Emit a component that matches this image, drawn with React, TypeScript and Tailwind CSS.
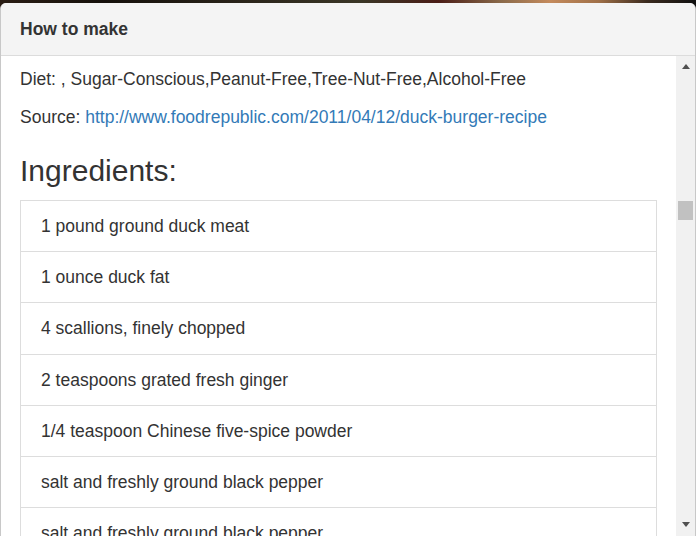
const ingredients = [
  '1 pound ground duck meat',
  '1 ounce duck fat',
  '4 scallions, finely chopped',
  '2 teaspoons grated fresh ginger',
  '1/4 teaspoon Chinese five-spice powder',
  'salt and freshly ground black pepper',
  'salt and freshly ground black pepper',
  '4 brioche buns',
];

function Scrollbar() {
  return (
    <div className="w-[19px] shrink-0 bg-[#f1f1f1] flex flex-col items-center">
      <div className="mt-[8px] w-0 h-0 border-l-[4.5px] border-r-[4.5px] border-b-[5px] border-l-transparent border-r-transparent border-b-[#505050]" />
      <div className="mt-[132px] w-[15px] h-[19px] bg-[#c1c1c1]" />
      <div className="flex-1" />
      <div className="mb-[9px] w-0 h-0 border-l-[4.5px] border-r-[4.5px] border-t-[5px] border-l-transparent border-r-transparent border-t-[#505050]" />
    </div>
  );
}

export default function App() {
  return (
    <div
      className="h-[536px] w-[696px] overflow-hidden pt-[3px] flex flex-col bg-[linear-gradient(to_right,#2a1d14_0%,#15100b_15%,#2a241a_35%,#3a3626_52%,#4a1c16_63%,#8a6a4a_72%,#c48a5c_79%,#a07048_86%,#3a2a1e_93%,#111_100%)]"
      style={{ fontFamily: '"Liberation Sans", Arial, sans-serif' }}
    >
      <div className="flex-1 min-h-0 flex flex-col bg-white rounded-t-[6px] border-x border-[#c8c8c8] overflow-hidden text-[#333]">
        {/* header */}
        <div className="h-[53px] shrink-0 flex items-center px-[19px] bg-[#f4f4f4] border-b border-[#dcdcdc]">
          <h4 className="text-[17.5px] leading-[20px] font-bold">How to make</h4>
        </div>

        {/* body */}
        <div className="flex-1 min-h-0 flex">
          <div className="flex-1 min-w-0 overflow-hidden px-[19px] pt-[11px]">
            <p className="text-[17.5px] leading-[24px] mb-[14px]">
              Diet: , Sugar-Conscious,Peanut-Free,Tree-Nut-Free,Alcohol-Free
            </p>
            <p className="text-[17.5px] leading-[24px]">
              Source:{' '}
              <a href="#" className="text-[#337ab7]">
                http://www.foodrepublic.com/2011/04/12/duck-burger-recipe
              </a>
            </p>
            <h2 className="text-[30px] leading-[33px] font-normal mt-[25px] mb-[13px]">Ingredients:</h2>
            <ul className="flex flex-col">
              {ingredients.map((item, i) => (
                <li
                  key={i}
                  className="border border-[#dddddd] -mt-px first:mt-0 px-[20px] py-[15px] text-[17.5px] leading-[20.2px]"
                >
                  {item}
                </li>
              ))}
            </ul>
          </div>
          <Scrollbar />
        </div>
      </div>
    </div>
  );
}
